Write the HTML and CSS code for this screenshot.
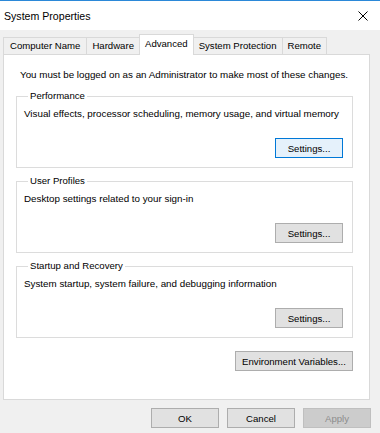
FILE: index.html
```html
<!DOCTYPE html>
<html>
<head>
    <link rel="stylesheet" href="styles.css">
</head>
<body>
    <div class="window">
        <div class="titlebar">
            <span class="title">System Properties</span>
            <svg class="close" width="10" height="10" viewBox="0 0 10 10">
                <path d="M0.5 0.5 L9.5 9.5 M9.5 0.5 L0.5 9.5" stroke="#000" stroke-width="1" fill="none"/>
            </svg>
        </div>

        <div class="tabs">
            <div class="tab">Computer Name</div>
            <div class="tab">Hardware</div>
            <div class="tab active">Advanced</div>
            <div class="tab">System Protection</div>
            <div class="tab">Remote</div>
        </div>

        <div class="panel">
            <p class="note">You must be logged on as an Administrator to make most of these changes.</p>

            <fieldset class="group">
                <legend>Performance</legend>
                <p class="desc">Visual effects, processor scheduling, memory usage, and virtual memory</p>
                <div class="group-actions">
                    <button class="btn focused">Settings...</button>
                </div>
            </fieldset>

            <fieldset class="group">
                <legend>User Profiles</legend>
                <p class="desc">Desktop settings related to your sign-in</p>
                <div class="group-actions">
                    <button class="btn">Settings...</button>
                </div>
            </fieldset>

            <fieldset class="group">
                <legend>Startup and Recovery</legend>
                <p class="desc">System startup, system failure, and debugging information</p>
                <div class="group-actions">
                    <button class="btn">Settings...</button>
                </div>
            </fieldset>

            <div class="env-row">
                <button class="btn wide">Environment Variables...</button>
            </div>
        </div>

        <div class="dialog-actions">
            <button class="btn">OK</button>
            <button class="btn">Cancel</button>
            <button class="btn disabled">Apply</button>
        </div>
    </div>
</body>
</html>
```

FILE: styles.css
```css
body {
    margin: 0;
    background-color: #f0f0f0;
    font-family: 'Liberation Sans', Arial, sans-serif;
    font-size: 9.6px;
    color: #000;
}

.window {
    width: 380px;
    height: 433px;
    display: flex;
    flex-direction: column;
}

.titlebar {
    height: 29px;
    background-color: #fff;
    border-top: 1px solid #2b88d8;
    display: flex;
    align-items: center;
    justify-content: space-between;
    padding: 0 12px 0 4px;
}

.title {
    font-size: 10.6px;
}

.tabs {
    display: flex;
    align-items: flex-end;
    height: 19px;
    margin-top: 5px;
    padding-left: 3px;
}

.tab {
    height: 16px;
    line-height: 16px;
    padding: 0 5px;
    border: 1px solid #d9d9d9;
    border-bottom: none;
    margin-right: -1px;
    background-color: #f0f0f0;
    white-space: nowrap;
}

.tab:first-child {
    padding: 0 6px;
}

.tab.active {
    position: relative;
    z-index: 1;
    height: 20px;
    line-height: 18px;
    margin-bottom: -1px;
    background-color: #fff;
}

.panel {
    margin: 0 10px 0 3px;
    height: 330px;
    background-color: #fff;
    border: 1px solid #d9d9d9;
    padding: 14px 16px 0 12px;
}

.note {
    margin: 0 0 9px 4px;
    line-height: 12px;
    font-size: 9.8px;
    white-space: nowrap;
}

.group {
    margin: 0 0 7px 0;
    padding: 6px 9px 9px 7px;
    border: 1px solid #dcdcdc;
    min-inline-size: 0;
}

.group legend {
    padding: 0 2px;
    margin-left: 4px;
    line-height: 12px;
}

.desc {
    margin: 0;
    line-height: 12px;
    font-size: 9.8px;
    white-space: nowrap;
}

.group-actions {
    display: flex;
    justify-content: flex-end;
    margin-top: 18px;
}

.btn {
    font-family: inherit;
    font-size: 9.6px;
    color: #000;
    width: 68px;
    height: 20px;
    padding: 0;
    background-color: #e1e1e1;
    border: 1px solid #adadad;
    border-radius: 0;
}

.btn.focused {
    background-color: #e5f1fb;
    border-color: #0078d7;
}

.btn.wide {
    width: 118px;
}

.btn.disabled {
    background-color: #cccccc;
    border-color: #bfbfbf;
    color: #8d8d8d;
}

.env-row {
    display: flex;
    justify-content: flex-end;
    margin-top: 13px;
}

.dialog-actions {
    display: flex;
    justify-content: flex-end;
    gap: 8px;
    margin-top: 8px;
    padding-right: 9px;
}
```
